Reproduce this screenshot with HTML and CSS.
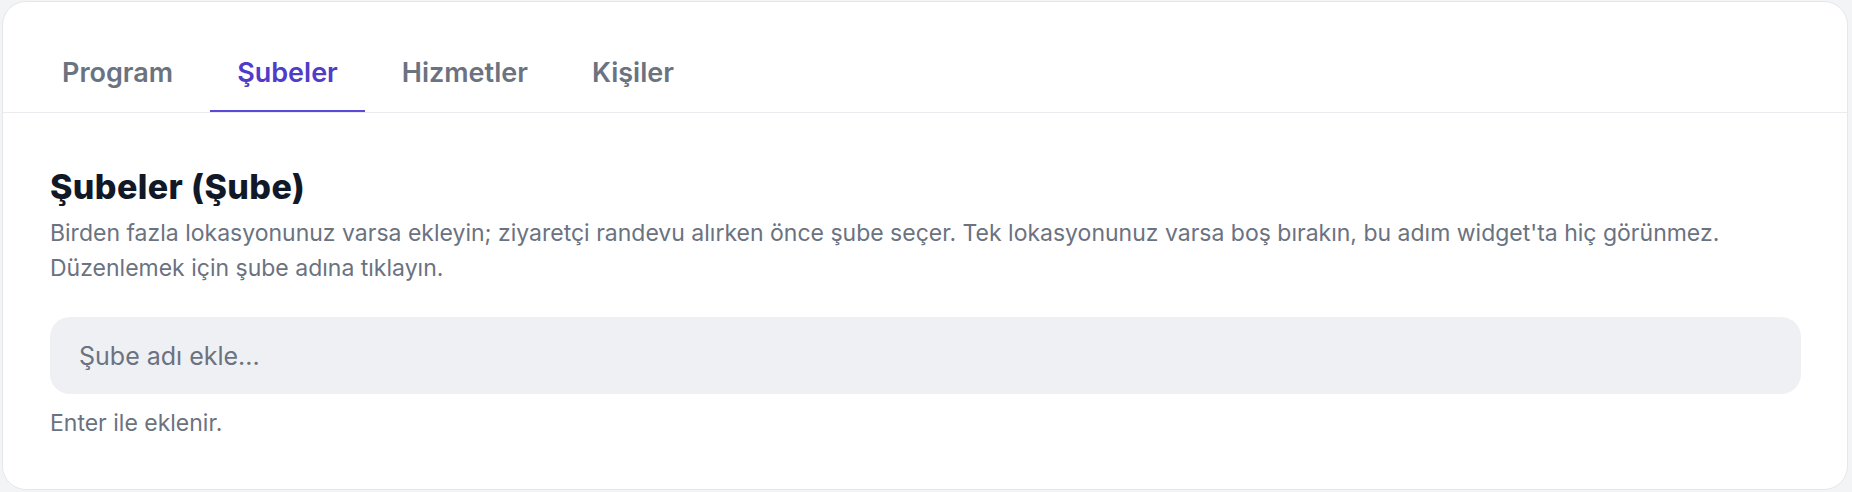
FILE: index.html
```html
<!DOCTYPE html>
<html lang="tr">
<head>
<meta charset="utf-8">
<title>Şubeler</title>
<link rel="stylesheet" href="styles.css">
</head>
<body>
<div class="card">
  <nav class="tabs">
    <button class="tab">Program</button>
    <button class="tab active">Şubeler</button>
    <button class="tab">Hizmetler</button>
    <button class="tab">Kişiler</button>
  </nav>
  <section class="content">
    <h2 class="title">Şubeler (Şube)</h2>
    <p class="desc">Birden fazla lokasyonunuz varsa ekleyin; ziyaretçi randevu alırken önce şube seçer. Tek lokasyonunuz varsa boş bırakın, bu adım widget'ta hiç görünmez. Düzenlemek için şube adına tıklayın.</p>
    <input class="field" type="text" placeholder="Şube adı ekle...">
    <p class="hint">Enter ile eklenir.</p>
  </section>
</div>
</body>
</html>
```
FILE: styles.css
```css
* { box-sizing: border-box; }
html, body { margin: 0; }
body {
  padding: 1px 4px 2px 2px;
  background: #f3f4f6;
  font-family: Inter, "Noto Sans", sans-serif;
}
.card {
  background: #fff;
  border: 1px solid #e5e7eb;
  border-radius: 24px;
  height: 489px;
  overflow: hidden;
}
.tabs {
  display: flex;
  gap: 10px;
  padding: 33px 32px 0;
  border-bottom: 1px solid #ececf0;
}
.tab {
  font-family: inherit;
  font-size: 27px;
  line-height: 30px;
  font-weight: 600;
  color: #6b7280;
  background: none;
  border: 0;
  border-bottom: 2px solid transparent;
  padding: 23px 27px 22px;
  margin: 0;
  cursor: pointer;
}
.tab.active {
  color: #4f3cc9;
  border-bottom-color: #5a48d6;
}
.content {
  padding: 53px 46px 0 47px;
}
.title {
  margin: 0 0 8px;
  font-size: 34px;
  line-height: 42px;
  font-weight: 800;
  color: #111827;
  letter-spacing: 0.4px;
}
.desc {
  margin: 0;
  font-size: 23px;
  line-height: 35px;
  color: #6b7280;
}
.field {
  display: block;
  width: 100%;
  height: 77px;
  margin-top: 31px;
  padding: 0 29px;
  border: 0;
  border-radius: 20px;
  background: #eef0f4;
  font-family: inherit;
  font-size: 25px;
  color: #111827;
  outline: none;
}
.field::placeholder { color: #6b7280; }
.hint {
  margin: 14px 0 0;
  font-size: 23px;
  line-height: 30px;
  color: #6b7280;
}
```
